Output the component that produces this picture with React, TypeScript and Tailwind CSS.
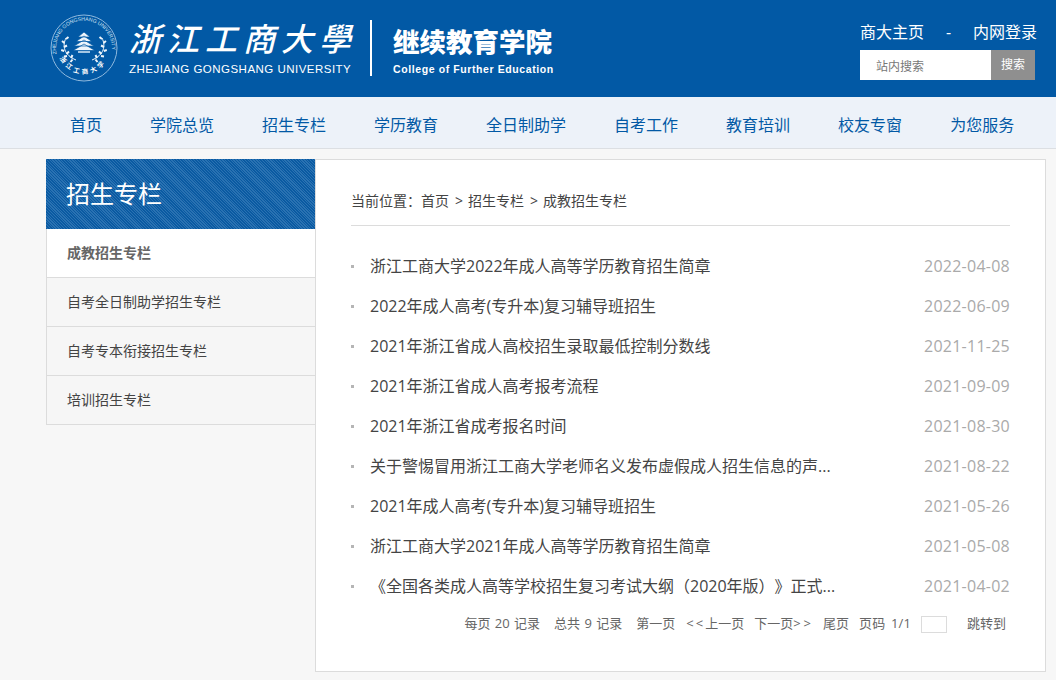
const navItems = ["首页", "学院总览", "招生专栏", "学历教育", "全日制助学", "自考工作", "教育培训", "校友专窗", "为您服务"];

const sideItems = ["成教招生专栏", "自考全日制助学招生专栏", "自考专本衔接招生专栏", "培训招生专栏"];

const news = [
  { title: "浙江工商大学2022年成人高等学历教育招生简章", date: "2022-04-08" },
  { title: "2022年成人高考(专升本)复习辅导班招生", date: "2022-06-09" },
  { title: "2021年浙江省成人高校招生录取最低控制分数线", date: "2021-11-25" },
  { title: "2021年浙江省成人高考报考流程", date: "2021-09-09" },
  { title: "2021年浙江省成考报名时间", date: "2021-08-30" },
  { title: "关于警惕冒用浙江工商大学老师名义发布虚假成人招生信息的声...", date: "2021-08-22" },
  { title: "2021年成人高考(专升本)复习辅导班招生", date: "2021-05-26" },
  { title: "浙江工商大学2021年成人高等学历教育招生简章", date: "2021-05-08" },
  { title: "《全国各类成人高等学校招生复习考试大纲（2020年版）》正式...", date: "2021-04-02" },
];

const Seal = () => (
  <svg viewBox="0 0 68 68" className="w-[68px] h-[68px] shrink-0">
    <circle cx="34" cy="34" r="33" fill="none" stroke="#8fb9de" strokeWidth="1" />
    <defs>
      <path id="sealArc" d="M6.5 40 A28 28 0 1 1 61.5 40" />
      <path id="sealArcLow" d="M10 44 A26 26 0 0 0 58 44" />
    </defs>
    <text fontSize="5.2" fill="#cfe2f3" fontFamily="Liberation Sans">
      <textPath href="#sealArc">ZHEJIANG GONGSHANG UNIVERSITY</textPath>
    </text>
    <text fontSize="6.5" fill="#ffffff" fontFamily="Noto Sans CJK SC" fontWeight="700" letterSpacing="3">
      <textPath href="#sealArcLow">浙江工商大学</textPath>
    </text>
    {/* tree */}
    <path
      d="M34 18 L40 23 L28 23 Z M34 22 L42 27.5 L26 27.5 Z M34 26 L44 32 L24 32 Z M34 30 L45 36.5 L23 36.5 Z"
      fill="#eef5fb"
      stroke="#0259a5"
      strokeWidth="0.7"
    />
    <path d="M28 38 H40" stroke="#cfe2f3" strokeWidth="1.6" />
    {/* laurel */}
    <path d="M16 24 C12 32 14 41 26 46 M52 24 C56 32 54 41 42 46" fill="none" stroke="#eef5fb" strokeWidth="1" />
    <path
      d="M16 25 l2.5 -2 M14.5 29 l-2.5 -2 M14 33 l3 -1.5 M14.2 37 l-3 -1 M16.5 40 l2.5 -2.5 M17 42 l-3 0.5 M21 44 l1.5 -3 M22.5 45.5 l-2 2.5 M52 25 l-2.5 -2 M53.5 29 l2.5 -2 M54 33 l-3 -1.5 M53.8 37 l3 -1 M51.5 40 l-2.5 -2.5 M51 42 l3 0.5 M47 44 l-1.5 -3 M45.5 45.5 l2 2.5"
      fill="none"
      stroke="#eef5fb"
      strokeWidth="2"
    />
  </svg>
);

export default function App() {
  return (
    <div className="min-h-[680px] bg-[#f7f7f7] font-['Open_Sans','Noto_Sans_CJK_SC',sans-serif] text-[#333] overflow-hidden [text-spacing-trim:space-all]">
      <header className="h-[97px] bg-[#0259a5] flex justify-between pl-[50px] pr-[19px]">
        <div className="flex items-center pb-[1px]">
          <Seal />
          <div className="ml-[11px] w-[224px] text-white">
            <div className="font-['Noto_Sans_CJK_JP',serif] italic font-medium text-[32px] leading-[40px] tracking-[6px] whitespace-nowrap -mt-[4px]">
              浙江工商大學
            </div>
            <div className="font-['Liberation_Sans',sans-serif] text-[11.5px] leading-[14px] tracking-[0.48px] whitespace-nowrap mt-[5px]">
              ZHEJIANG GONGSHANG UNIVERSITY
            </div>
          </div>
          <div className="w-[2px] h-[56px] bg-white ml-[17px] mr-[21px]" />
          <div className="text-white">
            <div className="font-['Noto_Sans_CJK_SC',sans-serif] font-black text-[26.5px] leading-[36px] whitespace-nowrap mt-[3px]">
              继续教育学院
            </div>
            <div className="font-['Liberation_Sans',sans-serif] font-bold text-[10.5px] leading-[14px] tracking-[0.6px] mt-[3px] whitespace-nowrap">
              College of Further Education
            </div>
          </div>
        </div>
        <div className="w-[177px] pt-[22px]">
          <div className="flex justify-between text-white text-[16px] leading-[20px]">
            <span>商大主页</span>
            <span>-</span>
            <span>内网登录</span>
          </div>
          <div className="flex mt-[8px] w-[175px] h-[30px]">
            <input
              placeholder="站内搜索"
              className="w-[131px] h-full bg-white pl-[16px] pt-[3px] text-[12px] placeholder:text-[#777] outline-none"
            />
            <button className="w-[44px] h-full bg-[#8f8f8f] text-white text-[12px]">搜索</button>
          </div>
        </div>
      </header>

      <nav className="h-[52px] bg-[#edf2f9] border-b border-[#dcdfe3] flex items-center pl-[70px] pt-[4px] gap-[48px] text-[16px] text-[#0259a5]">
        {navItems.map((item) => (
          <a key={item} className="whitespace-nowrap">
            {item}
          </a>
        ))}
      </nav>

      <main className="flex pl-[46px] pr-[10px] pt-[10px]">
        <aside className="w-[269px] shrink-0">
          <div className="h-[70px] bg-[#0f62a8] bg-[repeating-linear-gradient(45deg,#0a5aa2_0px,#0a5aa2_1px,#2a72b2_1px,#2a72b2_2px)] flex items-center pl-[20px] text-white text-[24px]">
            招生专栏
          </div>
          <div className="border-l border-[#dcdcdc]">
            {sideItems.map((item, index) => (
              <div
                key={item}
                className={`h-[49px] flex items-center pl-[20px] pb-[2px] text-[14px] border-b border-[#dcdcdc] ${
                  index === 0 ? "bg-white font-bold text-[#666]" : "bg-[#f6f6f6] text-[#444]"
                }`}
              >
                {item}
              </div>
            ))}
          </div>
        </aside>

        <section className="flex-1 h-[513px] bg-white border border-[#dcdcdc] px-[35px]">
          <div className="h-[66px] border-b border-[#dcdcdc] pt-[31px] flex gap-[6px] text-[14px] leading-[20px] text-[#444] whitespace-nowrap">
            <span className="w-[64px]">当前位置：</span>
            <span>首页</span>
            <span className="w-[7px]">&gt;</span>
            <span>招生专栏</span>
            <span className="w-[7px]">&gt;</span>
            <span>成教招生专栏</span>
          </div>
          <ul className="mt-[20px]">
            {news.map((row) => (
              <li key={row.date} className="h-[40px] flex items-center justify-between text-[16px]">
                <span className="flex items-center whitespace-nowrap text-[#444]">
                  <i className="w-[3px] h-[3px] bg-[#b5b5b5] mr-[16px]" />
                  {row.title}
                </span>
                <span className="text-[#aaa] tracking-[0.25px]">{row.date}</span>
              </li>
            ))}
          </ul>
          <div className="flex items-center justify-end h-[20px] mt-[8px] pr-[4px] text-[13px] text-[#666] whitespace-nowrap [word-spacing:1px]">
            <span className="mr-[14px]">每页 20 记录</span>
            <span className="mr-[14px]">总共 9 记录</span>
            <span className="mr-[11px]">第一页</span>
            <span className="mr-[10px]">
              <span className="tracking-[2px]">&lt;&lt;</span>上一页
            </span>
            <span className="mr-[9px]">
              下一页<span className="tracking-[3px]">&gt;&gt;</span>
            </span>
            <span className="mr-[10px]">尾页</span>
            <span className="mr-[10px] [word-spacing:2px] tracking-[0.15px]">页码 1/1</span>
            <input className="w-[26px] h-[17px] border border-[#dcdcdc] mr-[20px]" />
            <span>跳转到</span>
          </div>
        </section>
      </main>
    </div>
  );
}
